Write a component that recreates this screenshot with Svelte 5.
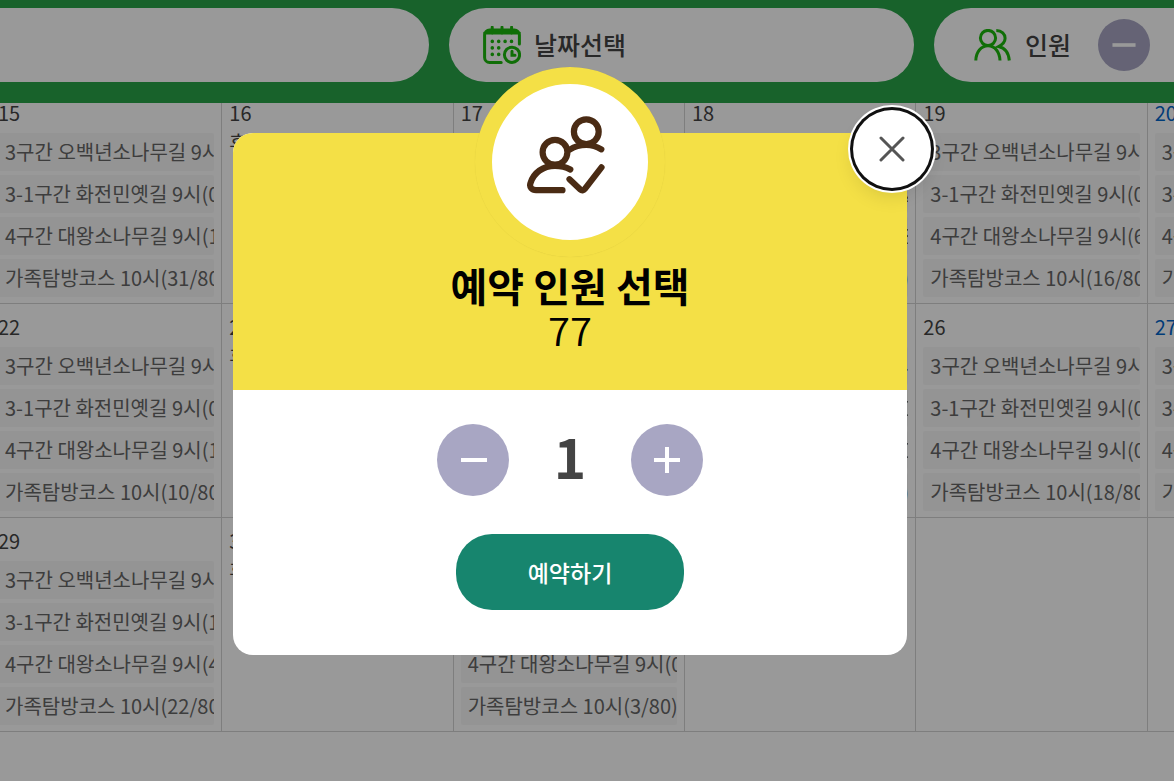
<script lang="ts">
  interface Day {
    day?: number;
    closed?: boolean;
    blue?: boolean;
    courses?: string[];
  }

  const COURSES = ['3구간 오백년소나무길 9시', '3-1구간 화전민옛길 9시', '4구간 대왕소나무길 9시', '가족탐방코스 10시'];

  function open(day: number, counts: string[], blue = false): Day {
    return { day, blue, courses: COURSES.map((c, i) => `${c}(${counts[i]})`) };
  }

  const weeks: Day[][] = [
    [
      open(15, ['0/80', '0/80', '1/80', '31/80']),
      { day: 16, closed: true },
      open(17, ['0/80', '0/80', '0/80', '3/80']),
      open(18, ['0/80', '2/80', '8/80', '0/80']),
      open(19, ['0/80', '0/80', '6/80', '16/80']),
      open(20, ['0/80', '0/80', '0/80', '20/80'], true),
    ],
    [
      open(22, ['0/80', '0/80', '1/80', '10/80']),
      { day: 23, closed: true },
      open(24, ['0/80', '0/80', '0/80', '3/80']),
      open(25, ['0/80', '0/80', '0/80', '0/80']),
      open(26, ['0/80', '0/80', '0/80', '18/80']),
      open(27, ['0/80', '0/80', '0/80', '20/80'], true),
    ],
    [
      open(29, ['0/80', '1/80', '4/80', '22/80']),
      { day: 30, closed: true },
      open(31, ['0/80', '0/80', '0/80', '3/80']),
      {},
      {},
      {},
    ],
  ];

  const remaining = 77;
  let count = $state(1);
  let modalOpen = $state(true);

  function step(n: number) {
    count = Math.min(remaining, Math.max(1, count + n));
  }
</script>

<div class="page">
  <header class="search-bar">
    <div class="fields">
      <div class="field"></div>
      <button class="field" type="button">
        <svg class="icon-date" viewBox="0 0 38 38" fill="none" aria-hidden="true">
          <path d="M36.400 18V9a5 5 0 0 0-5-5H6.600a5 5 0 0 0-5 5v22.400a5 5 0 0 0 5 5H18.200M1.600 7h34.800M9.200 1.200v6M19 1.200v6M28.600 1.200v6" />
          <circle cx="29" cy="28.800" r="7.600" />
          <path d="M29 25.300v4h3" />
          <path class="dots" d="M9.300 15.400h0M15.700 15.400h0M22.100 15.400h0M28.500 15.400h0M9.300 21.900h0M15.700 21.900h0M9.300 28.400h0M15.700 28.400h0" />
        </svg>
        <span>날짜선택</span>
      </button>
      <div class="field people">
        <svg class="icon-people" viewBox="0 0 38 32" fill="none" aria-hidden="true">
          <circle cx="14" cy="9" r="7.600" />
          <path d="M1.800 31.500C2 23 7 16.800 14 16.800S25.700 23 26 31.500M22.300 1.600c5.500 0 8.800 3.400 8.800 7.600 0 4-2.800 6.400-6.500 8.300 6 1.200 10 6 10.700 14" />
        </svg>
        <span>인원</span>
        <button class="round small" type="button" aria-label="인원 줄이기" onclick={() => step(-1)}>
          <svg viewBox="0 0 72 72" aria-hidden="true"><path d="M20 36h32" stroke="#fff" stroke-width="5" /></svg>
        </button>
      </div>
    </div>
  </header>

  <main class="calendar">
    <table>
      <tbody>
        {#each weeks as week, w (w)}
          <tr>
            {#each week as d, i (i)}
              <td>
                {#if d.day}
                  <div class="day" class:blue={d.blue}>{d.day}</div>
                {/if}
                {#if d.closed}
                  <div class="closed">휴무일</div>
                {/if}
                {#each d.courses ?? [] as course (course)}
                  <a class="course" href="#reserve">{course}</a>
                {/each}
              </td>
            {/each}
          </tr>
        {/each}
      </tbody>
    </table>
  </main>
</div>

{#if modalOpen}
  <div class="overlay">
    <div class="modal" role="dialog" aria-modal="true" aria-labelledby="modal-title">
      <button class="close" type="button" aria-label="닫기" onclick={() => (modalOpen = false)}>
        <svg viewBox="0 0 26 26" aria-hidden="true">
          <path d="M2 2l22 22M24 2L2 24" stroke="#555" stroke-width="3" stroke-linecap="round" />
        </svg>
      </button>

      <div class="modal-head">
        <div class="badge">
          <svg viewBox="0 0 78 78" fill="none" aria-hidden="true">
            <circle cx="59.300" cy="15.700" r="12.400" />
            <circle cx="28" cy="36.300" r="12.400" />
            <path d="M43 33.500C47.500 30.500 53 29 59.300 29c5.500 0 10.500 1.500 15 4.300" />
            <path d="M43.300 53.500C38.800 51 33.500 49.800 28 49.800c-12 0-21.500 7-24.600 17.500C2.200 71.500 5 74.200 9 74.200h26.500" />
            <path d="M42.500 63.200l10.800 10.200c1.500 1.400 3.300 1.200 4.600-.5l16.600-21.500" />
          </svg>
        </div>
        <h2 id="modal-title">예약 인원 선택</h2>
        <p>{remaining}</p>
      </div>

      <div class="modal-body">
        <div class="counter">
          <button class="round" type="button" aria-label="줄이기" onclick={() => step(-1)}>
            <svg viewBox="0 0 72 72" aria-hidden="true"><path d="M24 36h26" stroke="#fff" stroke-width="4" /></svg>
          </button>
          <output>{count}</output>
          <button class="round" type="button" aria-label="늘리기" onclick={() => step(1)}>
            <svg viewBox="0 0 72 72" aria-hidden="true"><path d="M23 36h26M36 23v26" stroke="#fff" stroke-width="4" /></svg>
          </button>
        </div>
        <button class="submit" type="button">예약하기</button>
      </div>
    </div>
  </div>
{/if}

<style>
  :global(body) {
    margin: 0;
    background: #fff;
    font-family: 'Noto Sans CJK KR', sans-serif;
    color: #444;
  }

  button {
    font-family: inherit;
    color: inherit;
    border: 0;
    padding: 0;
    cursor: pointer;
  }

  .page {
    overflow: hidden;
  }

  .search-bar {
    position: relative;
    z-index: 1;
    background: #28a348;
    padding: 8px 0 21px;
  }

  /* the strip is wider than the window and runs off both sides */
  .fields {
    display: grid;
    grid-template-columns: repeat(3, 1fr);
    gap: 20px;
    width: calc(100% + 261px);
    margin-left: -36px;
  }

  .field {
    display: flex;
    align-items: center;
    gap: 13px;
    height: 74px;
    box-sizing: border-box;
    padding: 0 34px;
    border-radius: 37px;
    background: #fff;
    font-size: 25px;
    font-weight: 500;
  }

  .field.people {
    padding-left: 40px;
  }

  .field span {
    padding-bottom: 3px;
  }

  .icon-date,
  .icon-people {
    width: 38px;
    stroke: #1cb80c;
    stroke-width: 3;
    stroke-linecap: round;
  }

  .icon-people {
    stroke-linecap: butt;
  }

  .icon-date .dots {
    stroke-width: 3.6;
  }

  .round {
    width: 72px;
    height: 72px;
    border-radius: 50%;
    background: #a8a6c3;
  }

  .round svg {
    display: block;
    width: 100%;
  }

  .round.small {
    width: 52px;
    height: 52px;
    margin-left: 14px;
  }

  table {
    width: calc(100% + 215px);
    margin: -14px 0 0 -10px;
    table-layout: fixed;
    border-collapse: collapse;
  }

  td {
    height: 206px;
    padding: 7px 7px 0;
    border: 1px solid #d2d2d2;
    vertical-align: top;
    font-size: 20px;
  }

  .day {
    height: 36px;
    line-height: 32px;
  }

  .day.blue {
    color: #0064c8;
  }

  .closed {
    line-height: 20px;
  }

  .course {
    display: block;
    height: 38px;
    margin-bottom: 4px;
    padding-left: 7px;
    border-radius: 2px;
    background: #f7f7f7;
    color: #666;
    line-height: 38px;
    text-decoration: none;
    white-space: nowrap;
    overflow: hidden;
  }

  .overlay {
    position: fixed;
    inset: 0;
    z-index: 10;
    display: flex;
    align-items: center;
    justify-content: center;
    padding: 7px 34px 0 0;
    background: rgba(0, 0, 0, 0.4);
  }

  .modal {
    position: relative;
    width: 674px;
    max-width: 90%;
    border-radius: 20px;
    background: #fff;
  }

  .close {
    position: absolute;
    top: -23px;
    right: -24px;
    display: grid;
    place-items: center;
    width: 78px;
    height: 78px;
    border-radius: 50%;
    background: #fff;
    box-shadow: 0 0 0 3px #101010, 0 0 0 5px #fff, 0 8px 20px rgba(0, 0, 0, 0.12);
  }

  .close svg {
    width: 26px;
  }

  .modal-head {
    display: flex;
    flex-direction: column;
    align-items: center;
    padding-bottom: 39px;
    border-radius: 20px 20px 0 0;
    background: #f4e046;
    color: #000;
    font-size: 40px;
    line-height: 44px;
  }

  .badge {
    display: grid;
    place-items: center;
    width: 156px;
    height: 156px;
    margin-top: -66px;
    border: 17px solid #f4e046;
    border-radius: 50%;
    background: #fff;
    box-shadow: 0 0 1px rgba(0, 0, 0, 0.1);
  }

  .badge svg {
    width: 78px;
    margin: 0 8px 14px 0;
    stroke: #4a2b14;
    stroke-width: 6.2;
    stroke-linecap: round;
  }

  .modal-head h2 {
    margin: 6px 0 0;
    font-size: 40px;
    font-weight: 700;
  }

  .modal-head p {
    margin: 0;
    font-weight: 350;
  }

  .modal-body {
    display: flex;
    flex-direction: column;
    align-items: center;
    gap: 38px;
    padding: 34px 0 45px;
  }

  .counter {
    display: flex;
    align-items: center;
    height: 72px;
  }

  .counter output {
    width: 122px;
    text-align: center;
    font-size: 55px;
    font-weight: 700;
    line-height: 62px;
    padding-bottom: 10px;
  }

  .submit {
    width: 228px;
    height: 76px;
    border-radius: 36px;
    background: #17856e;
    color: #fff;
    font-size: 23px;
    font-weight: 500;
  }
</style>
